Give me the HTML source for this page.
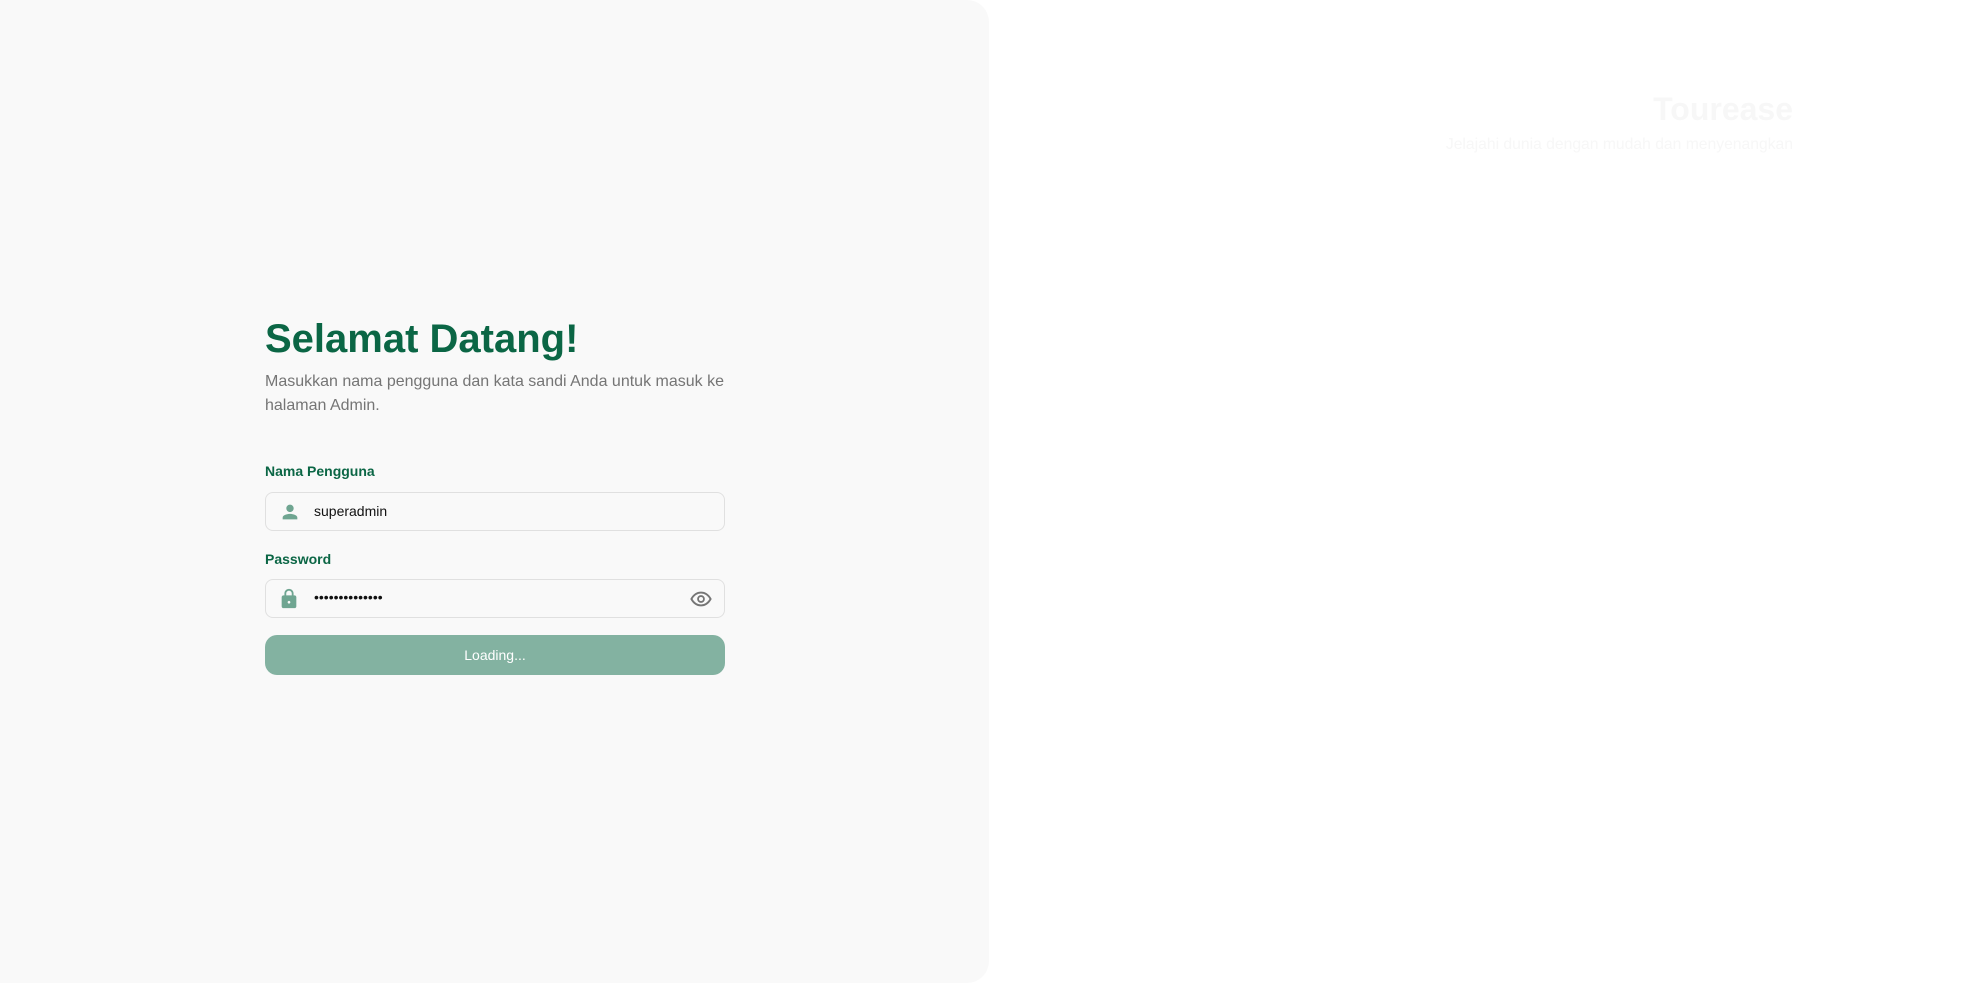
<!DOCTYPE html>
<html><head><meta charset="utf-8"><style>
*{margin:0;padding:0;box-sizing:border-box}
body{width:1978px;height:984px;background:#fff;font-family:"Liberation Sans",Arial,sans-serif;position:relative;overflow:hidden}
.panel{position:absolute;left:0;top:0;width:989px;height:983px;background:#f9f9f9;border-radius:0 22px 22px 0}
.form{position:absolute;left:265px;top:313px;width:460px}
h1{font-size:40px;font-weight:700;color:#0b6645;line-height:52px}
.sub{font-size:16px;color:#757575;line-height:24px;margin-top:5px;width:470px}
label{display:block;font-size:14px;font-weight:700;color:#0b6645;line-height:18px}
.l1{position:absolute;top:149px}
.l2{position:absolute;top:237px}
.inp{position:absolute;left:0;width:460px;height:39px;border:1px solid #e0e0e0;border-radius:8px;background:#f9f9f9}
.i1{top:179px}.i2{top:266px}
.inp span{position:absolute;left:48px;top:10px;font-size:14px;color:#111}
.inp svg{position:absolute}
.btn{position:absolute;top:322px;left:0;width:460px;height:40px;background:#83b2a1;border-radius:12px;color:#fff;font-size:14px;text-align:center;line-height:40px}
.brand{position:absolute;right:185px;top:89px;text-align:right;color:#f7f7f7}
.brand b{display:block;font-size:32px;line-height:40px}
.brand p{font-size:15.7px;line-height:24px;margin-top:4px}
</style></head><body>
<div class="panel"></div>
<div class="form">
<h1>Selamat Datang!</h1>
<p class="sub">Masukkan nama pengguna dan kata sandi Anda untuk masuk ke halaman Admin.</p>
<label class="l1">Nama Pengguna</label>
<div class="inp i1"><svg style="left:13px;top:8px" width="22" height="22" viewBox="0 0 24 24"><path fill="#6fa591" d="M12 12c2.2 0 4-1.8 4-4s-1.8-4-4-4-4 1.8-4 4 1.8 4 4 4zm0 2c-2.7 0-8 1.3-8 4v2h16v-2c0-2.7-5.3-4-8-4z"/></svg><span>superadmin</span></div>
<label class="l2">Password</label>
<div class="inp i2"><svg style="left:12px;top:7px" width="22" height="24" viewBox="0 0 24 24"><path fill="#6fa591" d="M18 8h-1V6c0-2.8-2.2-5-5-5S7 3.2 7 6v2H6c-1.1 0-2 .9-2 2v10c0 1.1.9 2 2 2h12c1.1 0 2-.9 2-2V10c0-1.1-.9-2-2-2zM9 6c0-1.7 1.3-3 3-3s3 1.3 3 3v2H9V6zm3 11c-.8 0-1.5-.7-1.5-1.5S11.2 14 12 14s1.5.7 1.5 1.5S12.8 17 12 17z"/></svg><span style="top:9px">••••••••••••••</span>
<svg style="left:423px;top:8px" width="24" height="22" viewBox="0 0 24 24"><path fill="none" stroke="#757575" stroke-width="2" d="M1.5 12C4 7.5 7.8 5 12 5s8 2.5 10.5 7C20 16.5 16.2 19 12 19S4 16.5 1.5 12z"/><circle cx="12" cy="12" r="3.2" fill="none" stroke="#757575" stroke-width="2"/></svg></div>
<div class="btn">Loading...</div>
</div>
<div class="brand"><b>Tourease</b><p>Jelajahi dunia dengan mudah dan menyenangkan</p></div>
</body></html>
